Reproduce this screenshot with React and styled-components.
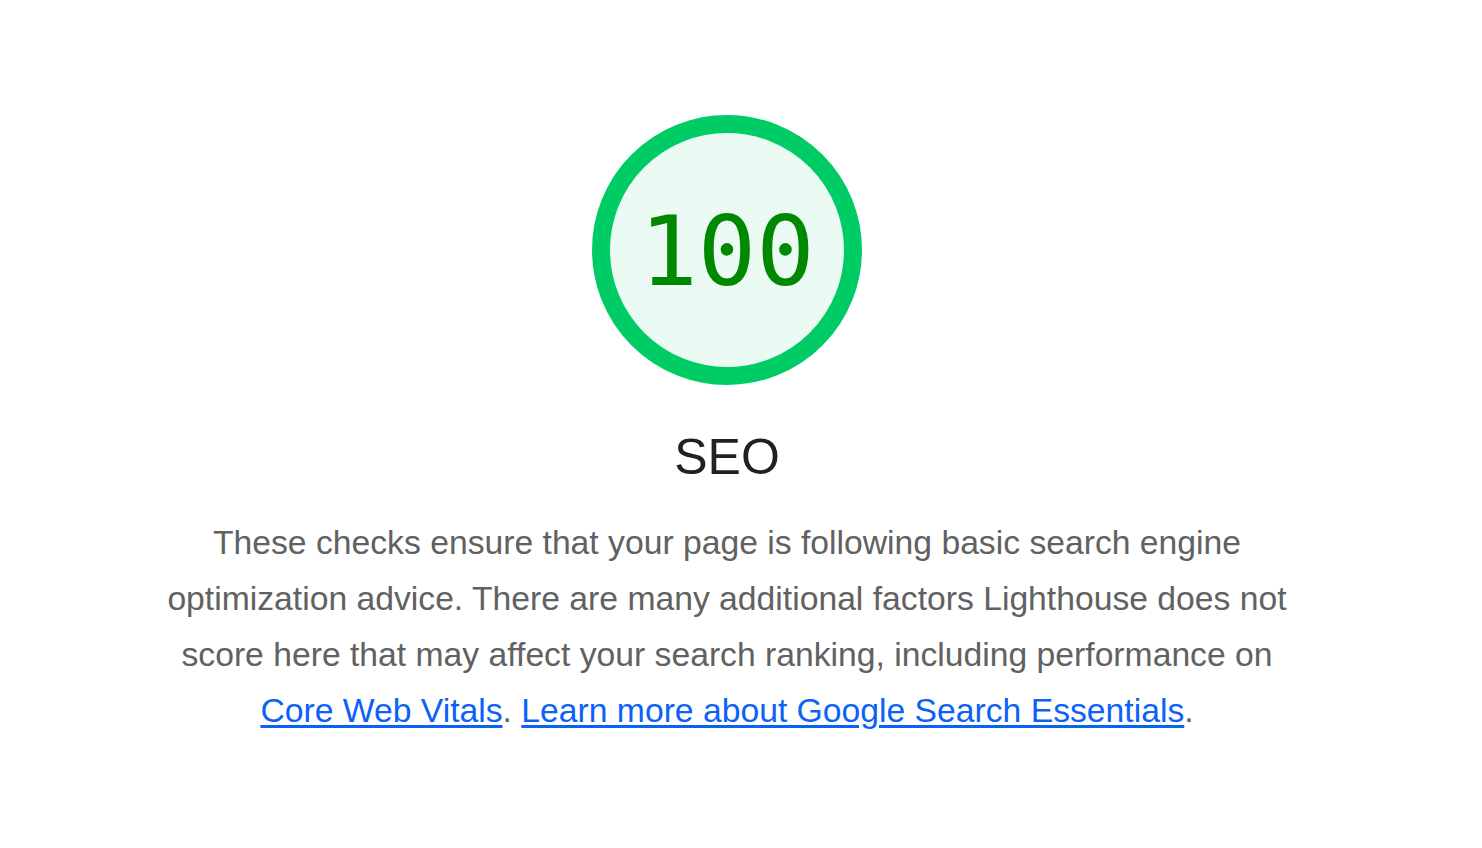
import React from "react";
import styled, { createGlobalStyle } from "styled-components";

const GlobalStyle = createGlobalStyle`
  html, body {
    margin: 0;
    padding: 0;
    background: #ffffff;
  }
  body {
    font-family: "Liberation Sans", Arial, sans-serif;
  }
`;

const Page = styled.main`
  box-sizing: border-box;
  width: 1482px;
  height: 848px;
  padding: 115px 28px 0 0;
  display: flex;
  flex-direction: column;
  align-items: center;
`;

const Gauge = styled.div`
  position: relative;
  width: 270px;
  height: 270px;
`;

const GaugeSvg = styled.svg`
  display: block;
`;

const Percentage = styled.div`
  position: absolute;
  inset: 0;
  display: flex;
  align-items: center;
  justify-content: center;
  font-family: "DejaVu Sans Mono", "Liberation Mono", monospace;
  font-size: 97px;
  color: #008800;
  padding-top: 2px;
`;

const Title = styled.h2`
  margin: 40px 0 0;
  font-size: 50px;
  font-weight: 400;
  line-height: 64px;
  color: #212121;
`;

const Description = styled.p`
  margin: 25px 0 0;
  max-width: 1130px;
  text-align: center;
  font-size: 33.7px;
  line-height: 56px;
  color: #616161;
`;

const Link = styled.a`
  color: #0b62f6;
  text-decoration: underline;
  text-underline-offset: 3px;
`;

const ScoreGauge = ({ score }) => (
  <Gauge>
    <GaugeSvg width="270" height="270" viewBox="0 0 270 270">
      <circle cx="135" cy="135" r="126" fill="rgba(0, 204, 102, 0.08)" stroke="#00cc66" strokeWidth="18" />
    </GaugeSvg>
    <Percentage>{score}</Percentage>
  </Gauge>
);

export default function App() {
  return (
    <>
      <GlobalStyle />
      <Page>
        <ScoreGauge score={100} />
        <Title>SEO</Title>
        <Description>
          These checks ensure that your page is following basic search engine optimization advice.
          There are many additional factors Lighthouse does not score here that may affect your
          search ranking, including performance on{" "}
          <Link href="#">Core Web Vitals</Link>.{" "}
          <Link href="#">Learn more about Google Search Essentials</Link>.
        </Description>
      </Page>
    </>
  );
}
